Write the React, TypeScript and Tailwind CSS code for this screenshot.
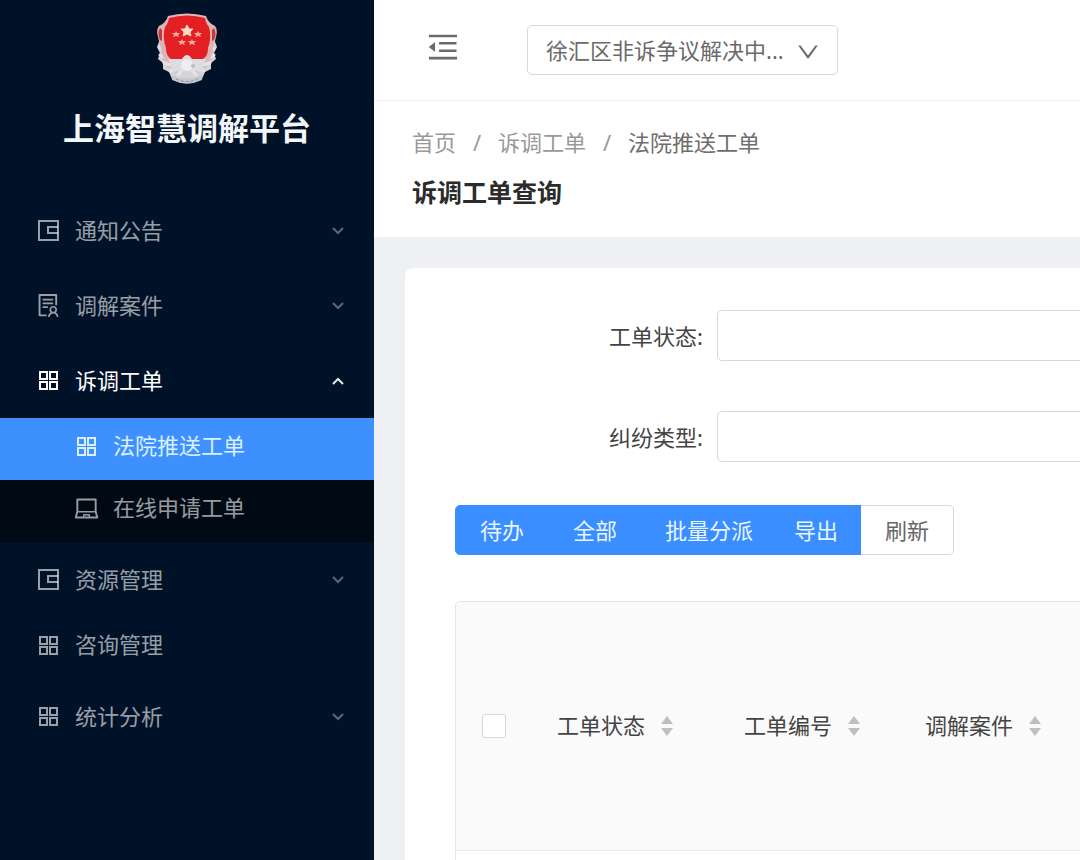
import { useState } from "react";
import type { ComponentType, ReactNode } from "react";
import { AiOutlineDown, AiOutlineLaptop, AiOutlineMenuFold, AiOutlineSolution } from "react-icons/ai";
import clsx from "clsx";

type IconProps = { size?: number };

type MenuItem = {
    label: string;
    icon: ComponentType<IconProps>;
    leaf?: boolean;
    children?: { label: string; icon: ComponentType<IconProps> }[];
};

function WalletIcon({ size = 27 }: IconProps) {
    return (
        <svg width={size} height={size} viewBox="0 0 27 27" fill="none" stroke="currentColor" strokeWidth="2" aria-hidden="true">
            <path d="M23 4 H4 V23 H23 Z" />
            <path d="M23 10 H13 V16 H23" />
        </svg>
    );
}

function GridIcon({ size = 27 }: IconProps) {
    return (
        <svg width={size} height={size} viewBox="0 0 27 27" fill="none" stroke="currentColor" strokeWidth="2" aria-hidden="true">
            <rect x="5" y="5" width="7" height="7" />
            <rect x="15" y="5" width="7" height="7" />
            <rect x="5" y="15" width="7" height="7" />
            <rect x="15" y="15" width="7" height="7" />
        </svg>
    );
}

function Arrow({ up }: { up: boolean }) {
    return (
        <svg
            width="14"
            height="14"
            viewBox="0 0 14 14"
            fill="none"
            stroke="currentColor"
            strokeWidth="2"
            className={up ? "opacity-90" : "opacity-60"}
            aria-hidden="true"
        >
            <path d={up ? "M2 10 L7 5 L12 10" : "M2 4 L7 9 L12 4"} />
        </svg>
    );
}

const menu: MenuItem[] = [
    { label: "通知公告", icon: WalletIcon },
    { label: "调解案件", icon: AiOutlineSolution },
    {
        label: "诉调工单",
        icon: GridIcon,
        children: [
            { label: "法院推送工单", icon: GridIcon },
            { label: "在线申请工单", icon: AiOutlineLaptop },
        ],
    },
    { label: "资源管理", icon: WalletIcon },
    { label: "咨询管理", icon: GridIcon, leaf: true },
    { label: "统计分析", icon: GridIcon },
];

const actions = [
    { label: "待办", className: "px-6 rounded-l-[5px]" },
    { label: "全部", className: "px-6" },
    { label: "批量分派", className: "pl-[23px] pr-5" },
    { label: "导出", className: "pl-5 pr-[23px]" },
];

function Emblem() {
    return (
        <svg width="64" height="72" viewBox="0 0 64 72" aria-hidden="true">
            {/* wreath */}
            <path
                d="M5 26 L2 34 L5 40 L3 46 L8 50 L8 56 L14 59 L17 66 Q32 75 47 66 L50 59 L56 56 L56 50 L61 46 L59 40 L62 34 L59 26 Z"
                fill="#d3d5da"
            />
            <path
                d="M5 35l7 5M5 42l8 4M9 50l8 2M15 58l7-3M59 35l-7 5M59 42l-8 4M55 50l-8 2M49 58l-7-3M23 62l4-5M41 62l-4-5"
                stroke="#f0dfe0"
                strokeWidth="3"
                strokeLinecap="round"
            />
            <path
                d="M6 39l6 4M7 46l7 3M12 54l7 0M19 61l5-4M58 39l-6 4M57 46l-7 3M52 54l-7 0M45 61l-5-4"
                stroke="#b9bcc4"
                strokeWidth="1"
            />
            {/* shield */}
            <path
                d="M13 3 Q32 -2 51 3 Q53 10 60 13 Q63 17 61 24 L58 36 Q57 46 50 50 L14 50 Q7 46 6 36 L3 24 Q1 17 4 13 Q11 10 13 3 Z"
                fill="#dfb4b5"
            />
            <path d="M5 15 Q2 21 5 27 L7 28 L7 17 Z M59 15 Q62 21 59 27 L57 28 L57 17 Z" fill="#c0393b" />
            <path
                d="M14 5 Q32 0 50 5 Q51 11 54 14 Q57 24 53 35 Q53 43 48 46 L16 46 Q11 43 11 35 Q7 24 10 14 Q13 11 14 5 Z"
                fill="#e31f24"
            />
            <path
                d="M32 12l2 4 4 0-3 3 1 4-4-2-4 2 1-4-3-3 4 0z"
                fill="#ffd7c4"
                stroke="#ffd7c4"
            />
            <g fill="#f8a99a">
                <path d="M21 18l1 2 3 0-2 2 1 2-3-1-3 1 1-2-2-2 3 0z" />
                <path d="M43 18l1 2 3 0-2 2 1 2-3-1-3 1 1-2-2-2 3 0z" />
                <path d="M27 26l1 2 3 0-2 2 1 2-3-1-3 1 1-2-2-2 3 0z" />
                <path d="M37 26l1 2 3 0-2 2 1 2-3-1-3 1 1-2-2-2 3 0z" />
            </g>
            {/* gear and ribbon */}
            <path d="M13 46 L27 46 Q32 38 37 46 L51 46 L46 58 L18 58 Z" fill="#dcdde1" />
            <circle cx="32" cy="52" r="6" fill="#eeeef1" />
            <circle cx="38" cy="53" r="2" fill="#b9bcc4" />
            <path d="M17 62 Q32 69 47 62 L47 67 Q32 74 17 67 Z" fill="#c3c7ce" />
            <path d="M21 66 Q32 71 43 66" stroke="#8f959f" strokeDasharray="3 2" fill="none" />
        </svg>
    );
}

function Sorter() {
    return (
        <svg width="12" height="20" viewBox="0 0 12 20" className="text-[#bfbfbf]" aria-hidden="true">
            <path d="M6 0 L12 8 H0 Z M6 20 L0 12 H12 Z" fill="currentColor" />
        </svg>
    );
}

function Sidebar() {
    const [open, setOpen] = useState("诉调工单");
    const [active, setActive] = useState("法院推送工单");

    return (
        <aside className="w-[374px] shrink-0 bg-[#001228] text-white/60">
            <div className="h-[193px] pt-[13px] flex flex-col items-center">
                <Emblem />
                <h1 className="mt-5 text-[31px] leading-[46px] font-bold text-[#f3f6f9]">上海智慧调解平台</h1>
            </div>
            <nav>
                {menu.map(({ label, icon: Icon, leaf, children }) => {
                    const isOpen = open === label;
                    return (
                        <div key={label}>
                            <button
                                type="button"
                                onClick={() => setOpen(isOpen ? "" : label)}
                                className={clsx(
                                    "w-full flex items-center gap-[13px] pl-[35px] pr-[29px] text-left",
                                    leaf ? "h-[62px] pb-[6px]" : "h-[75px]",
                                    isOpen && "text-white"
                                )}
                            >
                                <Icon size={27} />
                                <span className="flex-1 pb-[2px]">{label}</span>
                                {!leaf && <Arrow up={isOpen} />}
                            </button>
                            {isOpen && children && (
                                <div className="bg-[#000a14]">
                                    {children.map(({ label: sub, icon: SubIcon }) => (
                                        <a
                                            key={sub}
                                            href="#"
                                            onClick={() => setActive(sub)}
                                            className={clsx(
                                                "h-[62px] pb-[6px] pl-[73px] flex items-center gap-[13px]",
                                                active === sub && "bg-[#3f90ff] text-[#d8f0ff]"
                                            )}
                                        >
                                            <SubIcon size={27} />
                                            <span className="pb-[2px]">{sub}</span>
                                        </a>
                                    ))}
                                </div>
                            )}
                        </div>
                    );
                })}
            </nav>
        </aside>
    );
}

function Field({ id, label }: { id: string; label: string }) {
    return (
        <div className="flex items-center">
            <label htmlFor={id} className="w-[262px] shrink-0 pr-[14px] text-right text-[#444444]">
                {label}:
            </label>
            <input id={id} type="text" className="flex-1 min-w-0 h-[51px] px-4 border border-[#d9d9d9] rounded-[5px] bg-white outline-none" />
        </div>
    );
}

function HeadCell({ children }: { children: ReactNode }) {
    return (
        <th scope="col" className="pl-[25px] font-normal text-left">
            <div className="flex items-center gap-4">
                <span className="pb-[2px]">{children}</span>
                <Sorter />
            </div>
        </th>
    );
}

export default function App() {
    return (
        <div className="flex h-screen overflow-hidden bg-[#eff0f3] text-[22px] leading-[34px] font-['Noto_Sans','Noto_Sans_CJK_SC',sans-serif]">
            <Sidebar />
            <main className="flex-1 min-w-[1200px] flex flex-col">
                <header className="h-[101px] shrink-0 flex items-center pl-[51px] bg-white border-b border-[#f2f2f2]">
                    <button type="button" aria-label="收起菜单" className="pb-[6px] text-[#6b6b6b]">
                        <AiOutlineMenuFold size={36} />
                    </button>
                    <div className="relative ml-[66px]">
                        <select
                            aria-label="机构"
                            className="w-[311px] h-[50px] pl-[18px] pr-[48px] appearance-none bg-white border border-[#d9d9d9] rounded-[5px] text-[#6a6a6a] outline-none"
                        >
                            <option>徐汇区非诉争议解决中...</option>
                        </select>
                        <AiOutlineDown size={26} className="absolute right-[17px] top-[14px] pointer-events-none text-[#6a6a6a]" />
                    </div>
                </header>

                <section className="shrink-0 bg-white pl-[38px] pt-6 pb-[26px]">
                    <nav className="flex text-[#999999]">
                        <a href="#">首页</a>
                        <span className="w-[42px] text-center">/</span>
                        <a href="#">诉调工单</a>
                        <span className="w-[42px] text-center">/</span>
                        <span className="text-[#6e6e6e]">法院推送工单</span>
                    </nav>
                    <h2 className="mt-[14px] text-[25px] leading-[38px] font-bold text-[#2b2b2b]">诉调工单查询</h2>
                </section>

                <section className="flex-1 min-h-0 flex flex-col mt-[31px] ml-[31px] pt-[42px] pl-[50px] bg-white rounded-tl-[8px]">
                    <form className="flex flex-col gap-[50px]">
                        <Field id="status" label="工单状态" />
                        <Field id="type" label="纠纷类型" />
                    </form>

                    <div className="flex mt-[43px]">
                        {actions.map(({ label, className }) => (
                            <button
                                key={label}
                                type="button"
                                className={clsx("h-[50px] -mr-px border border-[#3b8eff] bg-[#3b8eff] text-[#e8f6ff]", className)}
                            >
                                {label}
                            </button>
                        ))}
                        <button type="button" className="h-[50px] px-6 border border-l-0 border-[#d9d9d9] rounded-r-[5px] bg-white text-[#666666]">
                            刷新
                        </button>
                    </div>

                    <div className="flex-1 min-h-0 mt-[46px] border-l border-t border-[#e4e4e4] rounded-tl-[5px] overflow-hidden">
                        <table className="w-full table-fixed text-[#444444]">
                            <colgroup>
                                <col className="w-[76px]" />
                                <col className="w-[187px]" />
                                <col className="w-[181px]" />
                                <col />
                            </colgroup>
                            <thead>
                                <tr className="h-[248px] bg-[#fafafa] border-b border-[#e8e8e8]">
                                    <th scope="col" className="pl-[26px] text-left">
                                        <input
                                            type="checkbox"
                                            aria-label="全选"
                                            className="block size-6 appearance-none bg-white border border-[#d9d9d9] rounded-[3px] checked:bg-[#3b8eff]"
                                        />
                                    </th>
                                    <HeadCell>工单状态</HeadCell>
                                    <HeadCell>工单编号</HeadCell>
                                    <HeadCell>调解案件</HeadCell>
                                </tr>
                            </thead>
                        </table>
                    </div>
                </section>
            </main>
        </div>
    );
}
